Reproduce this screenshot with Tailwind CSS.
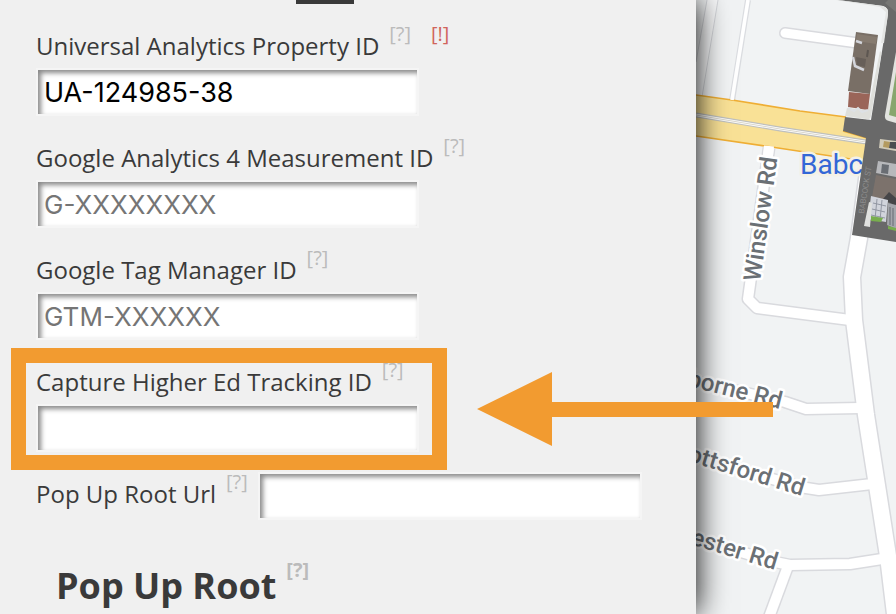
<!DOCTYPE html>
<html lang="en">
<head>
  <meta charset="UTF-8" />
  <meta name="viewport" content="width=device-width, initial-scale=1.0" />
  <title>Tracking Settings</title>
  <script src="https://cdn.jsdelivr.net/npm/@tailwindcss/browser@4"></script>
</head>
<body class="h-screen overflow-hidden bg-[#f0f0f0] text-[#3a3a3a] font-['Open_Sans',sans-serif]">
  <div class="flex h-full">

    <!-- Settings panel -->
    <main class="relative z-10 min-w-0 flex-1 bg-[#f0f0f0] px-9 shadow-[0_0_30px_#000]">
      <div class="ml-[260px] h-1 w-[58px] bg-[#3a3a3a]"></div>

      <form>
        <div>
          <div class="flex h-16 items-start gap-2.5 pt-6 text-2xl leading-9">
            <label for="ua">Universal Analytics Property ID</label>
            <a href="#" class="text-xl leading-3 text-[#bbb]">[?]</a>
            <a href="#" class="ml-2.5 text-xl leading-3 text-[#d0655c]">[!]</a>
          </div>
          <input id="ua" type="text" value="UA-124985-38" class="block h-12 w-[383px] border-2 border-[#f5f5f5] bg-white px-1.5 font-[Inter,sans-serif] text-[27px] text-black shadow-[inset_3px_3px_5px_#888]" />
        </div>

        <div>
          <div class="flex h-16 items-start gap-2.5 pt-6 text-2xl leading-9">
            <label for="ga4">Google Analytics 4 Measurement ID</label>
            <a href="#" class="text-xl leading-3 text-[#bbb]">[?]</a>
          </div>
          <input id="ga4" type="text" placeholder="G-XXXXXXXX" class="block h-12 w-[383px] border-2 border-[#f5f5f5] bg-white px-1.5 font-[Inter,sans-serif] text-[26px] text-black placeholder:text-[#757575] shadow-[inset_3px_3px_5px_#888]" />
        </div>

        <div>
          <div class="flex h-16 items-start gap-2.5 pt-6 text-2xl leading-9">
            <label for="gtm">Google Tag Manager ID</label>
            <a href="#" class="text-xl leading-3 text-[#bbb]">[?]</a>
          </div>
          <input id="gtm" type="text" placeholder="GTM-XXXXXX" class="block h-12 w-[383px] border-2 border-[#f5f5f5] bg-white px-1.5 font-[Inter,sans-serif] text-[26px] text-black placeholder:text-[#757575] shadow-[inset_3px_3px_5px_#888]" />
        </div>

        <div class="relative">
          <div class="flex h-16 items-start gap-2.5 pt-6 text-2xl leading-9">
            <label for="che">Capture Higher Ed Tracking ID</label>
            <a href="#" class="text-xl leading-3 text-[#bbb]">[?]</a>
          </div>
          <input id="che" type="text" class="block h-12 w-[383px] border-2 border-[#f5f5f5] bg-white px-1.5 font-[Inter,sans-serif] text-[26px] text-black shadow-[inset_3px_3px_5px_#888]" />
          <!-- Callout box and arrow -->
          <div class="pointer-events-none absolute top-2 -left-[25px] h-[122px] w-[436px] border-[15px] border-[#f29b30]"></div>
          <svg class="pointer-events-none absolute top-8 left-[441px] h-[74px] w-[296px]" viewBox="0 0 296 74" fill="#f29b30">
            <path d="M0 37 75 0v30h221v15H75v29z" />
          </svg>
        </div>

        <div class="flex items-start pt-5">
          <div class="flex w-[222px] items-start gap-2.5 pt-1 text-2xl leading-9">
            <label for="popup">Pop Up Root Url</label>
            <a href="#" class="text-xl leading-3 text-[#bbb]">[?]</a>
          </div>
          <input id="popup" type="text" class="block h-12 w-[384px] border-2 border-[#f5f5f5] bg-white px-1.5 font-[Inter,sans-serif] text-[26px] text-black shadow-[inset_3px_3px_5px_#888]" />
        </div>
      </form>

      <div class="flex items-start gap-2.5 pt-10 pl-5 font-bold">
        <h2 class="text-4xl leading-[52px]">Pop Up Root</h2>
        <a href="#" class="text-xl leading-5 text-[#bbb]">[?]</a>
      </div>
    </main>

    <!-- Map -->
    <aside class="w-[200px] shrink-0 bg-[#f1f3f4]">
      <svg class="h-full w-full" viewBox="696 0 200 614" preserveAspectRatio="xMinYMin slice">
        <defs>
          <g id="roads" fill="none" stroke-linejoin="round">
            <path d="M769 148 748 299 757 308 850 320" />
            <path d="M690 380 785 402 806 409 860 408" />
            <path d="M690 455 800 487 819 490 872 484" />
            <path d="M690 537 775 562 790 565 850 564 882 559" />
            <path d="M788 566 768 620" />
          </g>
          <path id="main-road" fill="none" stroke-linejoin="round" d="M871 150 859 238 852 277 854 320 866 415 888 556 896 622" />
        </defs>

        <path d="M707 0 696 62V96L703 97 718 0z" fill="#f8f9fa" />
        <path d="M707 0 696 62M718 0 702 97" stroke="#d5d7db" fill="none" />
        <path d="M748 0 732 101" stroke="#dadce0" stroke-width="6" />

        <use href="#roads" stroke="#d9dade" stroke-width="13" />
        <use href="#main-road" stroke="#d9dade" stroke-width="19" />
        <use href="#roads" stroke="#fff" stroke-width="10" />
        <use href="#main-road" stroke="#fff" stroke-width="16" />

        <path d="M785 33 858 43" stroke="#d9dade" stroke-width="12" stroke-linecap="round" />
        <path d="M785 33 858 43" stroke="#fff" stroke-width="9" stroke-linecap="round" />

        <!-- Avenue -->
        <path d="M696 95 732 100 800 111 846 117 843 131 867 138 864 161 765 146 696 136z" fill="#f9e196" />
        <path d="M696 95 732 100 800 111 846 117M843 131 867 138M696 136 765 146 864 161" stroke="#efae34" stroke-width="1.6" fill="none" />
        <path d="M696 115 780 129 866 142" stroke="#bfc0bd" stroke-width="5" fill="none" />
        <path d="M696 115 780 129 866 142" stroke="#fff" stroke-width="2.6" fill="none" />
        <path d="M696 115 780 129 866 142" stroke="#c9c4b4" stroke-width="0.7" fill="none" />
        <path d="M748 0 732 100" stroke="#fff" stroke-width="3.6" />
        <path d="M769 146 768 156" stroke="#fff" stroke-width="10" />

        <!-- Place and street names -->
        <g font-family="Roboto, sans-serif" font-weight="500" fill="#6b7075" stroke="#fff" stroke-width="5" stroke-linejoin="round" paint-order="stroke">
          <text x="800" y="174" font-size="28" font-weight="400" fill="#3367d6" stroke="#f4f1e6">Babc</text>
          <text font-size="24" transform="translate(760 282) rotate(-82)">Winslow Rd</text>
          <text font-size="24" text-anchor="end" transform="translate(780 409) rotate(14)">borne Rd</text>
          <text font-size="24" text-anchor="end" transform="translate(802 496) rotate(17)">ottsford Rd</text>
          <text font-size="24" text-anchor="end" transform="translate(775 570) rotate(17)">ester Rd</text>
        </g>

        <!-- Aerial imagery -->
        <path d="M838 0H896V242L852 235 866 138 843 131 845 117 871 120 888 14Q889 8 883 6z" fill="#696969" />
        <path d="M838 0 883 6Q889 8 888 14L884 43 881 43 886 12 880 7 836 0z" fill="#e4e5e4" />
        <path d="M880 51Q882 52 881 56L871 116Q870 120 866 119L845 116 847 108 868 110z" fill="#dedfdb" />
        <path d="M856 32 878 35 870 94 848 91z" fill="#796f66" />
        <path d="M857 34 877 37 876 44 856 41z" fill="#867b70" />
        <path d="M849 92 870 94 868 110 848 107z" fill="#9a6559" />
        <path d="M856 41 862 43M853 57 855 66 864 70" stroke="#d4d6dc" stroke-width="2.5" fill="none" />
        <path d="M868 50 867 57" stroke="#5d5651" stroke-width="2" fill="none" />
        <path d="M856 57 866 59 865 67 857 65z" fill="#675f59" />
        <path d="M848 108 854 111 858 108 862 112 868 110" stroke="#dde1e5" stroke-width="2" fill="none" />
        <path d="M896 52 885 115Q884 120 889 121L896 123z" fill="#e2e3df" />
        <path d="M896 72 889 115 896 117z" fill="#87a66e" />
        <path d="M888 0H896V12L885 3z" fill="#777775" />
        <path d="M880 139 896 141V151L879 148z" fill="#d0cbb9" />
        <path d="M884 141 890 142 889 148 883 147z" fill="#b39b60" />
        <path d="M890 142H896V149L889 148z" fill="#4b4d50" />
        <path d="M878 161 896 164V177L876 173z" fill="#b7b8bb" />
        <path d="M882 164 889 165 888 174 881 173z" fill="#696d73" />
        <path d="M876 175 896 179V203L872 197z" fill="#7c726c" />
        <path d="M883 199 889 192 896 198V206z" fill="#454548" />
        <path d="M871 196 888 200 886 222 868 219z" fill="#d1d4dc" />
        <path d="M873 203 886 206M872 209 885 212M871 215 885 218M877 199 875 219M882 200 880 220" stroke="#9297a3" />
        <path d="M888 203 896 205V229L887 225z" fill="#a4a6ac" />
        <path d="M890 207V225M893 208V226" stroke="#666b73" />
        <path d="M869 202 864 226 870 227 872 203z" fill="#e0e1df" />
        <path d="M871 216 883 218 881 222 871 221zM888 226 896 228V231L888 229z" fill="#78ae4e" />
        <text font-family="Roboto, sans-serif" font-size="8" fill="#8c8c8c" transform="translate(864 214) rotate(-81)">BABCOCK ST</text>
      </svg>
    </aside>
  </div>
</body>
</html>
